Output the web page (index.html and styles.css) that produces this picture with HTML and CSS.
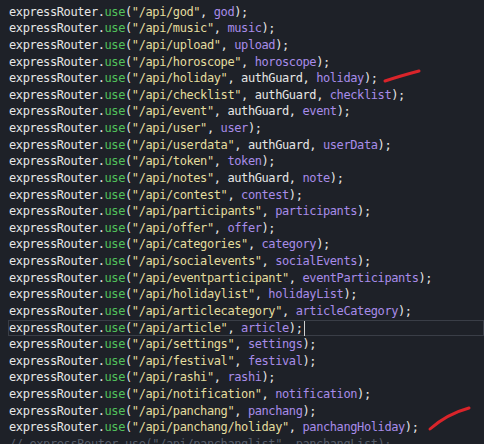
FILE: index.html
```html
<!DOCTYPE html>
<html>
<head>
<meta charset="utf-8">
<link rel="stylesheet" href="styles.css">
</head>
<body>
<div class="editor">
<div class="code">
<div class="ln">expressRouter.<span class="fn">use</span>(<span class="s">"/api/god"</span>, <span class="v">god</span>);</div>
<div class="ln">expressRouter.<span class="fn">use</span>(<span class="s">"/api/music"</span>, <span class="v">music</span>);</div>
<div class="ln">expressRouter.<span class="fn">use</span>(<span class="s">"/api/upload"</span>, <span class="v">upload</span>);</div>
<div class="ln">expressRouter.<span class="fn">use</span>(<span class="s">"/api/horoscope"</span>, <span class="v">horoscope</span>);</div>
<div class="ln">expressRouter.<span class="fn">use</span>(<span class="s">"/api/holiday"</span>, authGuard, <span class="v">holiday</span>);</div>
<div class="ln">expressRouter.<span class="fn">use</span>(<span class="s">"/api/checklist"</span>, authGuard, <span class="v">checklist</span>);</div>
<div class="ln">expressRouter.<span class="fn">use</span>(<span class="s">"/api/event"</span>, authGuard, <span class="v">event</span>);</div>
<div class="ln">expressRouter.<span class="fn">use</span>(<span class="s">"/api/user"</span>, <span class="v">user</span>);</div>
<div class="ln">expressRouter.<span class="fn">use</span>(<span class="s">"/api/userdata"</span>, authGuard, <span class="v">userData</span>);</div>
<div class="ln">expressRouter.<span class="fn">use</span>(<span class="s">"/api/token"</span>, <span class="v">token</span>);</div>
<div class="ln">expressRouter.<span class="fn">use</span>(<span class="s">"/api/notes"</span>, authGuard, <span class="v">note</span>);</div>
<div class="ln">expressRouter.<span class="fn">use</span>(<span class="s">"/api/contest"</span>, <span class="v">contest</span>);</div>
<div class="ln">expressRouter.<span class="fn">use</span>(<span class="s">"/api/participants"</span>, <span class="v">participants</span>);</div>
<div class="ln">expressRouter.<span class="fn">use</span>(<span class="s">"/api/offer"</span>, <span class="v">offer</span>);</div>
<div class="ln">expressRouter.<span class="fn">use</span>(<span class="s">"/api/categories"</span>, <span class="v">category</span>);</div>
<div class="ln">expressRouter.<span class="fn">use</span>(<span class="s">"/api/socialevents"</span>, <span class="v">socialEvents</span>);</div>
<div class="ln">expressRouter.<span class="fn">use</span>(<span class="s">"/api/eventparticipant"</span>, <span class="v">eventParticipants</span>);</div>
<div class="ln">expressRouter.<span class="fn">use</span>(<span class="s">"/api/holidaylist"</span>, <span class="v">holidayList</span>);</div>
<div class="ln">expressRouter.<span class="fn">use</span>(<span class="s">"/api/articlecategory"</span>, <span class="v">articleCategory</span>);</div>
<div class="ln current">expressRouter.<span class="fn">use</span>(<span class="s">"/api/article"</span>, <span class="v">article</span>);<span class="cursor"></span></div>
<div class="ln">expressRouter.<span class="fn">use</span>(<span class="s">"/api/settings"</span>, <span class="v">settings</span>);</div>
<div class="ln">expressRouter.<span class="fn">use</span>(<span class="s">"/api/festival"</span>, <span class="v">festival</span>);</div>
<div class="ln">expressRouter.<span class="fn">use</span>(<span class="s">"/api/rashi"</span>, <span class="v">rashi</span>);</div>
<div class="ln">expressRouter.<span class="fn">use</span>(<span class="s">"/api/notification"</span>, <span class="v">notification</span>);</div>
<div class="ln">expressRouter.<span class="fn">use</span>(<span class="s">"/api/panchang"</span>, <span class="v">panchang</span>);</div>
<div class="ln">expressRouter.<span class="fn">use</span>(<span class="s">"/api/panchang/holiday"</span>, <span class="v">panchangHoliday</span>);</div>
<div class="ln comment">// expressRouter.use("/api/panchanglist", panchangList);</div>
</div>
<svg class="marks" width="484" height="444" viewBox="0 0 484 444">
<path d="M385 81 Q 400 76 419 71" stroke="#d9242a" stroke-width="3" fill="none" stroke-linecap="round"/>
<path d="M430 429 Q 447 414 469 408" stroke="#d9242a" stroke-width="3" fill="none" stroke-linecap="round"/>
</svg>
</div>
</body>
</html>
```
FILE: styles.css
```css
html, body {
  margin: 0;
  padding: 0;
  background: #1e2128;
}
.editor {
  position: relative;
  width: 484px;
  height: 444px;
  overflow: hidden;
  background: #1e2128;
}
.code {
  padding-top: 3.7px;
  font-family: "DejaVu Sans Mono", "Liberation Mono", monospace;
  font-size: 12px;
  letter-spacing: -0.4px;
  color: #e6e6e6;
}
.ln {
  white-space: pre;
  height: 16.64px;
  line-height: 16.64px;
  padding-left: 9px;
}
.ln.current {
  margin-left: 8px;
  padding-left: 1px;
  box-shadow: inset 0 0 0 1px #3a3e47;
}
.fn { color: #52c15c; }
.s { color: #e4dd9e; }
.v { color: #a88ce9; }
.comment { color: #555c68; }
.cursor {
  display: inline-block;
  width: 1px;
  height: 15px;
  vertical-align: middle;
  background: #d0d0d0;
  margin-left: 1px;
}
.marks {
  position: absolute;
  left: 0;
  top: 0;
}
```
